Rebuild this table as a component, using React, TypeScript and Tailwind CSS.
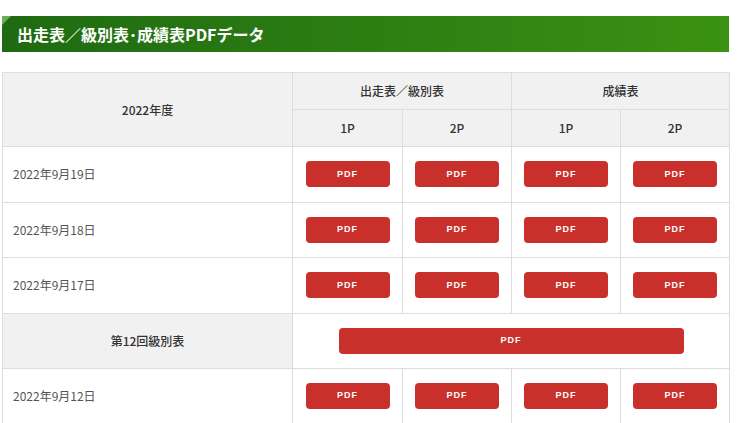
import React from "react";

const font = { fontFamily: '"Noto Sans CJK JP", "Noto Sans", sans-serif' };

const rows: { label: string; kind: "date" | "round" }[] = [
  { label: "2022年9月19日", kind: "date" },
  { label: "2022年9月18日", kind: "date" },
  { label: "2022年9月17日", kind: "date" },
  { label: "第12回級別表", kind: "round" },
  { label: "2022年9月12日", kind: "date" },
];

const PdfButton: React.FC<{ wide?: boolean }> = ({ wide }) => (
  <a
    href="#"
    className={`mx-auto flex h-[26px] items-center justify-center rounded-[4px] bg-[#c9302c] text-[9px] font-bold tracking-[1px] text-white ${
      wide ? "w-[345px]" : "w-[84px]"
    }`}
    style={{ fontFamily: '"Liberation Sans", Arial, sans-serif' }}
  >
    PDF
  </a>
);

export default function App() {
  return (
    <div className="w-[752px] bg-white pt-4" style={font}>
      <div className="relative mx-[2px] flex h-[36px] w-[727px] items-center bg-gradient-to-r from-[#1f6a12] to-[#3a9212] pl-[15px]">
        <span
          className="absolute left-0 top-0 h-[9px] w-[9px] bg-[#6fae55]"
          style={{ clipPath: "polygon(0 0, 100% 0, 0 100%)" }}
        ></span>
        <h2 className="text-[16px] font-bold text-white">
          出走表／級別表･成績表PDFデータ
        </h2>
      </div>

      <table className="ml-[2px] mt-5 w-[727px] table-fixed border-collapse text-[#333]">
        <colgroup>
          <col className="w-[290px]" />
          <col className="w-[110px]" />
          <col className="w-[109px]" />
          <col className="w-[109px]" />
          <col className="w-[109px]" />
        </colgroup>
        <thead>
          <tr className="h-[37px] bg-[#f1f1f1] text-[12px]">
            <th rowSpan={2} className="border border-[#dddddd] font-medium">
              2022年度
            </th>
            <th colSpan={2} className="border border-[#dddddd] font-medium">
              出走表／級別表
            </th>
            <th colSpan={2} className="border border-[#dddddd] font-medium">
              成績表
            </th>
          </tr>
          <tr className="h-[37px] bg-[#f1f1f1] text-[12px]">
            <th className="border border-[#dddddd] font-medium">1P</th>
            <th className="border border-[#dddddd] font-medium">2P</th>
            <th className="border border-[#dddddd] font-medium">1P</th>
            <th className="border border-[#dddddd] font-medium">2P</th>
          </tr>
        </thead>
        <tbody>
          {rows.map((row) =>
            row.kind === "round" ? (
              <tr key={row.label} className="h-[55px]">
                <th className="border border-[#dddddd] bg-[#f1f1f1] text-[12px] font-medium">
                  {row.label}
                </th>
                <td colSpan={4} className="border border-[#dddddd]">
                  <PdfButton wide />
                </td>
              </tr>
            ) : (
              <tr key={row.label} className="h-[55.5px]">
                <td className="border border-[#dddddd] pl-[10px] text-[12px] text-[#555]">
                  {row.label}
                </td>
                {[0, 1, 2, 3].map((i) => (
                  <td key={i} className="border border-[#dddddd]">
                    <PdfButton />
                  </td>
                ))}
              </tr>
            )
          )}
        </tbody>
      </table>
    </div>
  );
}
